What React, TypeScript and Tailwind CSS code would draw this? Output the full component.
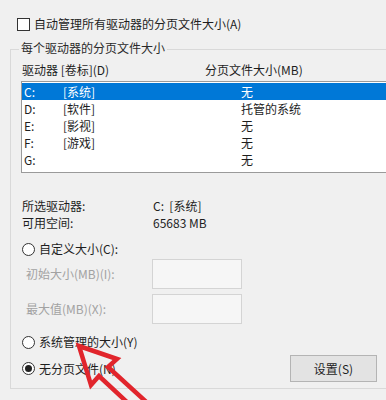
import React from "react";

const drives = [
  { letter: "C:", label: "[系统]", size: "无", selected: true },
  { letter: "D:", label: "[软件]", size: "托管的系统", selected: false },
  { letter: "E:", label: "[影视]", size: "无", selected: false },
  { letter: "F:", label: "[游戏]", size: "无", selected: false },
  { letter: "G:", label: "", size: "无", selected: false },
];

function Radio({ checked }: { checked?: boolean }) {
  return (
    <span className="flex h-[13px] w-[13px] shrink-0 items-center justify-center rounded-full border border-[#333333] bg-white">
      {checked && <span className="h-[7px] w-[7px] rounded-full bg-[#222222]" />}
    </span>
  );
}

function SizeRow({ label }: { label: string }) {
  return (
    <div className="flex h-[30px] items-center pl-[4px]">
      <span className="w-[126px] text-[#a2a2a2]">{label}</span>
      <div className="h-[30px] w-[90px] border border-[#d4d4d4] bg-[#f6f6f6]" />
    </div>
  );
}

export default function App() {
  return (
    <div
      className="relative h-[400px] w-[386px] overflow-hidden bg-[#f0f0f0] text-[12px] leading-[16px] text-[#1e1e1e]"
      style={{ fontFamily: '"Noto Sans CJK SC", "Noto Sans", sans-serif' }}
    >
      <div className="flex items-center gap-[4px] pl-[17px] pt-[16px]">
        <span className="h-[13px] w-[13px] border border-[#333333] bg-white" />
        <span>自动管理所有驱动器的分页文件大小(A)</span>
      </div>

      {/* group box runs past the right edge of the window */}
      <div className="ml-[10px] mt-[17px] w-[420px] border border-[#d9d9d9] pb-[6px] pl-[11px]">
        <div className="-mt-[10px] -ml-[3px] w-fit bg-[#f0f0f0] px-[2px] text-[#2a2a2a]">
          每个驱动器的分页文件大小
        </div>

        <div className="mt-[6px] flex">
          <span className="w-[183px]">驱动器 [卷标](D)</span>
          <span>分页文件大小(MB)</span>
        </div>

        <div className="-ml-px mt-[3px] h-[92px] w-[400px] border border-[#9a9a9a] bg-white pt-px">
          {drives.map((d) => (
            <div
              key={d.letter}
              className={
                d.selected
                  ? "flex h-[17px] items-center bg-[#0078d7] pl-[2px] text-white"
                  : "flex h-[17px] items-center pl-[2px]"
              }
            >
              <span className="w-[39px]">{d.letter}</span>
              <span className="w-[178px]">{d.label}</span>
              <span>{d.size}</span>
            </div>
          ))}
        </div>

        <div className="mt-[24px] flex h-[17px] items-center">
          <span className="w-[131px]">所选驱动器:</span>
          <span>C:&nbsp; [系统]</span>
        </div>
        <div className="flex h-[17px] items-center">
          <span className="w-[131px]">可用空间:</span>
          <span>65683 MB</span>
        </div>

        <div className="mt-[10px] flex h-[16px] items-center gap-[4px]">
          <Radio />
          <span>自定义大小(C):</span>
        </div>

        <div className="mt-[2px] flex flex-col gap-[5px]">
          <SizeRow label="初始大小(MB)(I):" />
          <SizeRow label="最大值(MB)(X):" />
        </div>

        <div className="mt-[10px] flex h-[16px] items-center gap-[4px]">
          <Radio />
          <span>系统管理的大小(Y)</span>
        </div>

        <div className="mt-[5px] flex h-[27px] items-center">
          <div className="flex w-[268px] items-center gap-[4px]">
            <Radio checked />
            <span>无分页文件(N)</span>
          </div>
          <button className="h-[27px] w-[87px] border border-[#b4b4b4] bg-[#e3e3e3] text-[#1e1e1e]">
            设置(S)
          </button>
        </div>
      </div>

      <svg
        className="pointer-events-none absolute left-0 top-0"
        width="386"
        height="400"
        viewBox="0 0 386 400"
      >
        <polygon
          points="79,346 117,359 108,367 154,409 144,418 99,376 91,385"
          fill="none"
          stroke="#e1252c"
          strokeWidth="4.5"
          strokeLinejoin="miter"
        />
      </svg>
    </div>
  );
}
